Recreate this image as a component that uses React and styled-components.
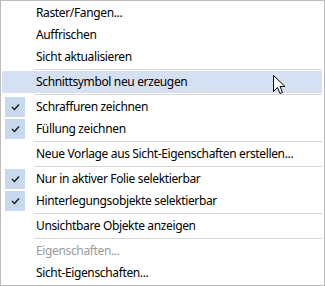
import React from 'react';
import styled, { createGlobalStyle } from 'styled-components';

const GlobalStyle = createGlobalStyle`
  html, body {
    margin: 0;
    padding: 0;
    background: #fff;
  }
`;

const Menu = styled.div`
  position: relative;
  width: 325px;
  height: 286px;
  box-sizing: border-box;
  border: 1px solid #bcbcbc;
  background: #fff;
  padding: 1px;
  display: flex;
  flex-direction: column;
  font-family: 'Noto Sans', 'Open Sans', sans-serif;
  font-size: 12px;
  letter-spacing: -0.36px;
  color: #000;
  overflow: hidden;
`;

const Item = styled.div`
  height: 22px;
  display: flex;
  align-items: center;
  margin-right: 1px;
  background: ${({ active }) => (active ? '#d5e1f2' : 'transparent')};
  color: ${({ disabled }) => (disabled ? '#9b9b9b' : '#000')};
`;

const Gutter = styled.div`
  width: 34px;
  height: 22px;
  flex-shrink: 0;
  display: flex;
  align-items: center;
  padding-left: 3px;
  box-sizing: border-box;
`;

const CheckBox = styled.div`
  width: 20px;
  height: 20px;
  background: #c8d8ef;
  display: flex;
  align-items: center;
  justify-content: center;
`;

const Label = styled.span`
  white-space: nowrap;
  line-height: 22px;
`;

const Separator = styled.div`
  height: 3px;
  display: flex;
  align-items: center;
  padding-left: 32px;
  margin-right: 1px;
  &::after {
    content: '';
    flex: 1;
    height: 1px;
    background: #d7d7d7;
  }
`;

const Cursor = styled.svg`
  position: absolute;
  left: 272px;
  top: 74px;
`;

const Check = () => (
  <svg width="9" height="8" viewBox="0 0 9 8">
    <polyline points="1,4 3.5,6.5 8,1.5" fill="none" stroke="#1a1a1a" strokeWidth="1.4" />
  </svg>
);

const items = [
  { label: 'Raster/Fangen...' },
  { label: 'Auffrischen' },
  { label: 'Sicht aktualisieren' },
  { sep: true },
  { label: 'Schnittsymbol neu erzeugen', active: true },
  { sep: true },
  { label: 'Schraffuren zeichnen', checked: true },
  { label: 'Füllung zeichnen', checked: true },
  { sep: true },
  { label: 'Neue Vorlage aus Sicht-Eigenschaften erstellen...' },
  { sep: true },
  { label: 'Nur in aktiver Folie selektierbar', checked: true },
  { label: 'Hinterlegungsobjekte selektierbar', checked: true },
  { sep: true },
  { label: 'Unsichtbare Objekte anzeigen' },
  { sep: true },
  { label: 'Eigenschaften...', disabled: true },
  { label: 'Sicht-Eigenschaften...' },
];

const App = () => (
  <>
    <GlobalStyle />
    <Menu>
      {items.map((it, i) =>
        it.sep ? (
          <Separator key={i} />
        ) : (
          <Item key={i} active={it.active} disabled={it.disabled}>
            <Gutter>
              {it.checked && (
                <CheckBox>
                  <Check />
                </CheckBox>
              )}
            </Gutter>
            <Label>{it.label}</Label>
          </Item>
        )
      )}
      <Cursor width="13" height="21" viewBox="0 0 13 21">
        <path
          d="M0.5 0.5 L0.5 16.5 L4.5 12.5 L7 18.5 L9.5 17.5 L7 11.5 L12 11.5 Z"
          fill="#fff"
          stroke="#000"
          strokeWidth="1"
          strokeLinejoin="miter"
        />
      </Cursor>
    </Menu>
  </>
);

export default App;
